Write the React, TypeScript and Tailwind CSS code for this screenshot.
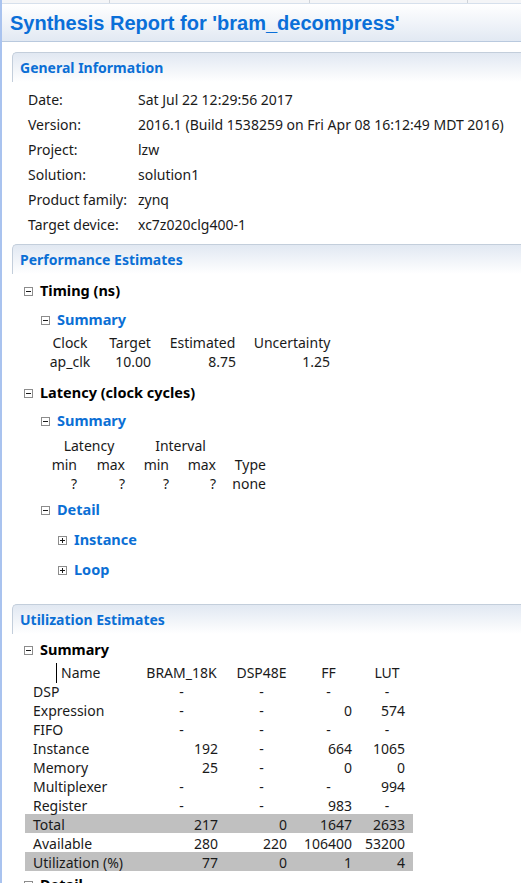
import React from 'react';

const font = "font-['Noto_Sans','Open_Sans',sans-serif]";

function Toggle({ open }: { open: boolean }) {
  return (
    <svg width="9" height="9" viewBox="0 0 9 9" className="shrink-0">
      <rect x="0.5" y="0.5" width="8" height="8" fill="white" stroke="#8c8c8c" />
      <line x1="2" y1="4.5" x2="7" y2="4.5" stroke="#1a1a1a" />
      {!open && <line x1="4.5" y1="2" x2="4.5" y2="7" stroke="#1a1a1a" />}
    </svg>
  );
}

function SectionHeader({ title }: { title: string }) {
  return (
    <div className="ml-[10px] h-[30px] flex items-center pl-[7px] border-t border-l border-[#c3cedb] rounded-tl-[5px] bg-gradient-to-b from-[#e1e8f2] to-white">
      <span className="text-[#0b6fd5] font-bold text-[14px]">{title}</span>
    </div>
  );
}

function Node({ open, label, level, blue, className = '' }: { open: boolean; label: string; level: number; blue?: boolean; className?: string }) {
  const pad = level === 1 ? 'pl-[22px]' : level === 2 ? 'pl-[39px]' : 'pl-[56px]';
  return (
    <div className={`h-[24px] flex items-center gap-[7px] ${pad} ${className}`}>
      <Toggle open={open} />
      <span className={`font-bold text-[14.5px] ${blue ? 'text-[#0b6fd5]' : 'text-black'}`}>{label}</span>
    </div>
  );
}

const general = [
  ['Date:', 'Sat Jul 22 12:29:56 2017'],
  ['Version:', '2016.1 (Build 1538259 on Fri Apr 08 16:12:49 MDT 2016)'],
  ['Project:', 'lzw'],
  ['Solution:', 'solution1'],
  ['Product family:', 'zynq'],
  ['Target device:', 'xc7z020clg400-1'],
];

const util = [
  ['DSP', '-', '-', '-', '-'],
  ['Expression', '-', '-', '0', '574'],
  ['FIFO', '-', '-', '-', '-'],
  ['Instance', '192', '-', '664', '1065'],
  ['Memory', '25', '-', '0', '0'],
  ['Multiplexer', '-', '-', '-', '994'],
  ['Register', '-', '-', '983', '-'],
  ['Total', '217', '0', '1647', '2633'],
  ['Available', '280', '220', '106400', '53200'],
  ['Utilization (%)', '77', '0', '1', '4'],
];

const utilCols = 'grid-cols-[111px_91px_69px_65px_52px]';

function Cell({ v, last }: { v: string; last?: boolean }) {
  if (v === '-') return <div className="text-center">-</div>;
  return <div className={`text-right ${last ? 'pr-[8px]' : 'pr-[9px]'}`}>{v}</div>;
}

export default function App() {
  return (
    <div className={`min-h-screen bg-white border-l-2 border-[#a9c3ef] text-[14px] text-[#1a1a1a] overflow-hidden ${font}`}>
      {/* tab strip */}
      <div className="h-[3px] flex bg-[#f4f5f7]">
        <div className="w-[108px] border-r border-[#cfd3d8]" />
        <div className="w-[200px] border-r border-[#cfd3d8]" />
        <div className="w-[158px] border-r border-[#cfd3d8]" />
      </div>
      <div className="h-[38px] flex items-center pl-[8px] bg-gradient-to-b from-white to-[#e2e9f3] border-t border-[#d6e0ec]">
        <h1 className="font-['Liberation_Sans',Arial,sans-serif] font-bold text-[20px] text-[#0a6fd8]">
          Synthesis Report for 'bram_decompress'
        </h1>
      </div>
      <div className="h-px bg-[#b9c9de]" />

      {/* General Information */}
      <div className="mt-[10px]">
        <SectionHeader title="General Information" />
        <div className="pt-[5px] pl-[26px]">
          {general.map(([k, v]) => (
            <div key={k} className="h-[25px] flex items-center">
              <span className="w-[110px] shrink-0">{k}</span>
              <span className="whitespace-nowrap">{v}</span>
            </div>
          ))}
        </div>
      </div>

      {/* Performance Estimates */}
      <div className="mt-[7px]">
        <SectionHeader title="Performance Estimates" />
        <Node open level={1} label="Timing (ns)" className="mt-[5px]" />
        <Node open level={2} blue label="Summary" className="mt-[5px]" />
        <div className="mt-[1px] ml-[38px] grid grid-cols-[60px_60px_85px_94px]">
          <div className="h-[19px] flex items-center justify-center">Clock</div>
          <div className="h-[19px] flex items-center justify-center">Target</div>
          <div className="h-[19px] flex items-center justify-center">Estimated</div>
          <div className="h-[19px] flex items-center justify-center">Uncertainty</div>
          <div className="h-[19px] flex items-center justify-center">ap_clk</div>
          <div className="h-[19px] flex items-center justify-end pr-[9px]">10.00</div>
          <div className="h-[19px] flex items-center justify-end pr-[9px]">8.75</div>
          <div className="h-[19px] flex items-center justify-end pr-[9px]">1.25</div>
        </div>

        <Node open level={1} label="Latency (clock cycles)" className="mt-[10px]" />
        <Node open level={2} blue label="Summary" className="mt-[4px]" />
        <div className="mt-[3px] ml-[41px] grid grid-cols-[44px_48px_44px_47px_50px] [&>div]:h-[19px] [&>div]:flex [&>div]:items-center">
          <div className="col-span-2 justify-center">Latency</div>
          <div className="col-span-2 justify-center">Interval</div>
          <div />
          <div className="justify-end pr-[10px]">min</div>
          <div className="justify-end pr-[10px]">max</div>
          <div className="justify-end pr-[10px]">min</div>
          <div className="justify-end pr-[10px]">max</div>
          <div className="justify-end pr-[10px]">Type</div>
          <div className="justify-end pr-[10px]">?</div>
          <div className="justify-end pr-[10px]">?</div>
          <div className="justify-end pr-[10px]">?</div>
          <div className="justify-end pr-[10px]">?</div>
          <div className="justify-end pr-[10px]">none</div>
        </div>
        <Node open level={2} blue label="Detail" className="mt-[5px]" />
        <Node open={false} level={3} blue label="Instance" className="mt-[6px]" />
        <Node open={false} level={3} blue label="Loop" className="mt-[6px]" />
      </div>

      {/* Utilization Estimates */}
      <div className="mt-[22px]">
        <SectionHeader title="Utilization Estimates" />
        <Node open level={1} label="Summary" className="mt-[4px]" />
        <div className="ml-[23px] w-[388px]">
          <div className={`grid ${utilCols} h-[19px] items-center`}>
            <div className="flex items-center h-full pl-[31px]">
              <span className="w-px h-[20px] bg-black mr-[4px]" />
              Name
            </div>
            <div className="text-center">BRAM_18K</div>
            <div className="text-center">DSP48E</div>
            <div className="text-center">FF</div>
            <div className="text-center">LUT</div>
          </div>
          {util.map((r, i) => (
            <div
              key={r[0]}
              className={`grid ${utilCols} h-[19px] items-center ${i === 7 || i === 9 ? 'bg-[#c0c0c0]' : ''}`}
            >
              <div className="pl-[8px] whitespace-nowrap">{r[0]}</div>
              <Cell v={r[1]} />
              <Cell v={r[2]} />
              <Cell v={r[3]} />
              <Cell v={r[4]} last />
            </div>
          ))}
        </div>
        <Node open level={1} label="Detail" className="mt-[2px]" />
      </div>
    </div>
  );
}
